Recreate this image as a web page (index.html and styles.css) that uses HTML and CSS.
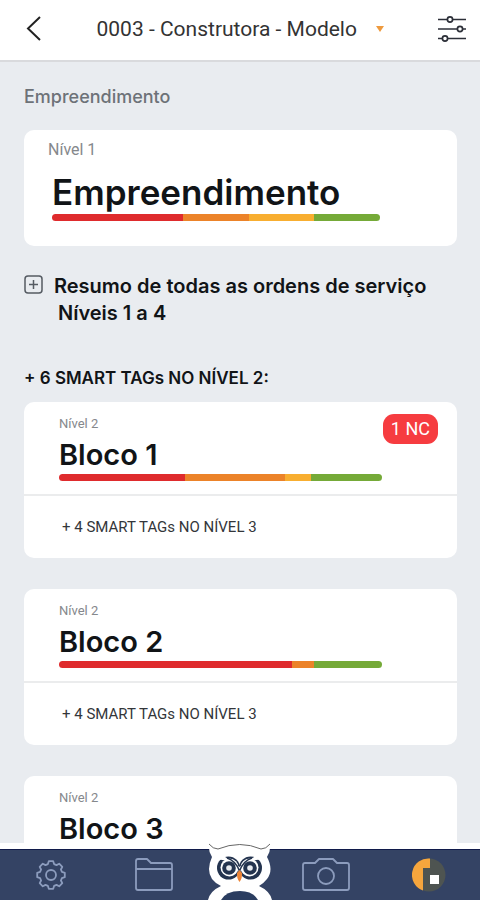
FILE: index.html
```
<!DOCTYPE html>
<html lang="pt-BR">
	<head>
		<meta charset="utf-8">
		<meta name="viewport" content="width=device-width, initial-scale=1">
		<title>0003 - Construtora - Modelo</title>
		<link rel="stylesheet" href="styles.css">
	</head>
	<body>
		<div class="screen">
			<header class="header">
				<button class="icon_button" type="button" aria-label="Voltar">
					<svg width="16" height="26" viewBox="0 0 16 26"><path d="M14 1 2 12.500 14 24" fill="none" stroke="#222" stroke-width="2"/></svg>
				</button>
				<label class="project">
					<select class="project_select" aria-label="Construtora">
						<option>0003 - Construtora - Modelo</option>
					</select>
					<svg width="8" height="6" viewBox="0 0 8 6"><path d="M0 0h8L4 6z" fill="#ee9a3e"/></svg>
				</label>
				<button class="icon_button" type="button" aria-label="Filtros">
					<svg width="28" height="26" viewBox="0 0 28 26" fill="#fff" stroke="#2c2f38" stroke-width="1.700">
						<path d="M0 3.500h28M0 13h28M0 22.500h28"/>
						<circle cx="12" cy="3.500" r="2.600"/>
						<circle cx="22" cy="13" r="2.600"/>
						<circle cx="7" cy="22.500" r="2.600"/>
					</svg>
				</button>
			</header>
			<main class="content">
				<p class="section_label">Empreendimento</p>
				<section class="card card_main">
					<p class="level">Nível 1</p>
					<h1 class="main_title">Empreendimento</h1>
					<div class="bar">
						<span class="red" style="width: 40%"></span>
						<span class="orange" style="width: 20%"></span>
						<span class="yellow" style="width: 20%"></span>
						<span class="green" style="width: 20%"></span>
					</div>
				</section>
				<button class="summary" type="button">
					<svg width="19" height="19" viewBox="0 0 19 19" fill="none" stroke="#555b62" stroke-width="1.500"><rect x="1" y="1" width="17" height="17" rx="3"/><path d="M5 9.500h9M9.500 5v9"/></svg>
					<span>Resumo de todas as ordens de serviço<br><span class="summary_levels">Níveis 1 a 4</span></span>
				</button>
				<h2 class="tags_title">+ 6 SMART TAGs NO NÍVEL 2:</h2>
				<div class="blocks">
					<section class="card">
						<div class="block_top">
							<p class="level">Nível 2</p>
							<h3 class="block_title">Bloco 1</h3>
							<div class="bar">
								<span class="red" style="width: 39%"></span>
								<span class="orange" style="width: 31%"></span>
								<span class="yellow" style="width: 8%"></span>
								<span class="green" style="width: 22%"></span>
							</div>
							<span class="badge">1 NC</span>
						</div>
						<button class="block_more" type="button">+ 4 SMART TAGs NO NÍVEL 3</button>
					</section>
					<section class="card">
						<div class="block_top">
							<p class="level">Nível 2</p>
							<h3 class="block_title">Bloco 2</h3>
							<div class="bar">
								<span class="red" style="width: 72%"></span>
								<span class="orange" style="width: 7%"></span>
								<span class="green" style="width: 21%"></span>
							</div>
						</div>
						<button class="block_more" type="button">+ 4 SMART TAGs NO NÍVEL 3</button>
					</section>
					<section class="card">
						<div class="block_top">
							<p class="level">Nível 2</p>
							<h3 class="block_title">Bloco 3</h3>
						</div>
					</section>
				</div>
			</main>
			<nav class="footer">
				<a href="#config" aria-label="Configurações">
					<svg width="30" height="30" viewBox="0 0 30 30" fill="none" stroke="#8c9cbd" stroke-width="1.800" stroke-linejoin="round">
						<path d="M11.900 4.100L12.800 1.200H17.200L18.100 4.100L20.500 5.100L23.200 3.700L26.300 6.800L24.900 9.500L25.900 11.900L28.800 12.800V17.200L25.900 18.100L24.900 20.500L26.300 23.200L23.200 26.300L20.500 24.900L18.100 25.900L17.200 28.800H12.800L11.900 25.900L9.500 24.900L6.800 26.300L3.700 23.200L5.100 20.500L4.100 18.100L1.200 17.200V12.800L4.100 11.900L5.100 9.500L3.700 6.800L6.800 3.700L9.500 5.100Z"/>
						<circle cx="15" cy="15" r="5"/>
					</svg>
				</a>
				<a href="#pastas" aria-label="Pastas">
					<svg width="38" height="34" viewBox="0 0 38 34" fill="none" stroke="#8c9cbd" stroke-width="1.800" stroke-linejoin="round">
						<path d="M1 30V3q0-2 2-2h9l4 4h19q2 0 2 2v23q0 2-2 2H3q-2 0-2-2zM1 11h36"/>
					</svg>
				</a>
				<a class="owl" href="#inicio" aria-label="Início">
					<svg width="66" height="57" viewBox="0 0 66 57">
						<path d="M2 1Q7 6 12 5Q33-1 53 5Q58 6 63 1Q64 8 60 14Q67 27 60 36Q56 41 52 43Q63 48 65 57H1Q3 48 14 43Q9 41 5 36Q-1 27 5 14Q1 8 2 1Z" fill="#fff"/>
						<path d="M2 1Q6 6 11 6Q33-3 54 6Q59 6 63 1" fill="none" stroke="#666" stroke-width="1"/>
						<circle cx="21.500" cy="25" r="11.500" fill="#24344f"/>
						<circle cx="43.500" cy="25" r="11.500" fill="#24344f"/>
						<circle cx="22.500" cy="24.500" r="9" fill="#fff"/>
						<circle cx="42.500" cy="24.500" r="9" fill="#fff"/>
						<path d="M4 9Q19 12 32.500 24Q46 12 61 9L57 18Q45 13 32.500 29Q20 13 8 18Z" fill="#fff"/>
						<circle cx="22" cy="25" r="6.800" fill="#24344f"/>
						<circle cx="43" cy="25" r="6.800" fill="#24344f"/>
						<circle cx="22" cy="25" r="2.800" fill="#e8ebef"/>
						<circle cx="43" cy="25" r="2.800" fill="#e8ebef"/>
						<path d="M20 15Q29 18 32.500 28Q36 18 45 15" fill="none" stroke="#24344f" stroke-width="1.500"/>
						<path d="M30 30L32.500 27L35 30Q35.500 35 32.500 39Q29.500 35 30 30Z" fill="#ec8436"/>
						<path d="M14 57Q19 48 33 48Q46 48 51 57Z" fill="#2b3d60"/>
					</svg>
				</a>
				<a href="#camera" aria-label="Câmera">
					<svg width="48" height="34" viewBox="0 0 48 34" fill="none" stroke="#8c9cbd" stroke-width="1.800" stroke-linejoin="round">
						<path d="M1 30V7q0-2 2-2h10l4-4h14l4 4h10q2 0 2 2v23q0 2-2 2H3q-2 0-2-2z"/>
						<circle cx="24" cy="18" r="8"/>
					</svg>
				</a>
				<a href="#painel" aria-label="Painel">
					<svg width="34" height="34" viewBox="0 0 34 34">
						<circle cx="17" cy="17" r="16.500" fill="#4e5451"/>
						<path d="M18 .500A16.500 16.500 0 0 0 11 32.500V10h7z" fill="#f6a63d"/>
						<path d="M18 17h9v9h-9z" fill="#fff"/>
					</svg>
				</a>
			</nav>
		</div>
	</body>
</html>
```
FILE: styles.css
```
*	{
	box-sizing: border-box;
}
html, body	{
	height: 100%;
	margin: 0;
}
body	{
	font-family: Inter, sans-serif;
	color: #111417;
	background: #e9ecf0;
}
h1, h2, h3, p	{
	margin: 0;
}
button, select	{
	font: inherit;
	color: inherit;
	border: 0;
	padding: 0;
	background: none;
	cursor: pointer;
}
svg	{
	display: block;
	flex-shrink: 0;
}
.screen	{
	display: flex;
	flex-direction: column;
	height: 100%;
}
.header	{
	display: flex;
	align-items: center;
	justify-content: space-between;
	padding: 15px 14px 17px 26px;
	background: #fff;
	border-bottom: 2px solid #d9dadd;
	flex-shrink: 0;
}
.project	{
	display: flex;
	align-items: center;
	gap: 18px;
}
.project_select	{
	appearance: none;
	font-family: Roboto, sans-serif;
	font-size: 21px;
	line-height: 28px;
	color: #333;
}
.content	{
	flex: 1;
	min-height: 0;
	overflow-y: auto;
	scrollbar-width: none;
	padding: 23px 23px 0 24px;
}
.section_label	{
	font-size: 18px;
	font-weight: 500;
	line-height: 24px;
	color: #6d7278;
}
.card	{
	background: #fff;
	border-radius: 10px;
}
.level	{
	font-family: Roboto, sans-serif;
	color: #85888c;
}
.card_main	{
	margin-top: 21px;
	padding: 8px 24px 25px 28px;
}
.card_main .level	{
	margin-left: -4px;
	font-size: 16px;
	line-height: 24px;
}
.main_title	{
	font-size: 35px;
	font-weight: 600;
	line-height: 44px;
	padding-top: 8px;
}
.bar	{
	display: flex;
	width: 86%;
	height: 7px;
	border-radius: 4px;
	overflow: hidden;
}
.red	{
	background: #df2b2d;
}
.orange	{
	background: #ec8329;
}
.yellow	{
	background: #f8ae30;
}
.green	{
	background: #75aa38;
}
.summary	{
	display: flex;
	gap: 11px;
	margin-top: 27px;
	font-size: 20px;
	font-weight: 600;
	line-height: 27px;
	text-align: left;
}
.summary svg	{
	margin-top: 2px;
}
.summary_levels	{
	padding-left: 4px;
}
.tags_title	{
	margin: 39px 0 12px;
	font-size: 17px;
	font-weight: 600;
	line-height: 24px;
}
.blocks	{
	display: flex;
	flex-direction: column;
	gap: 31px;
}
.block_top	{
	position: relative;
	padding: 12px 35px 13px;
}
.block_top .level	{
	font-size: 13px;
	line-height: 20px;
}
.block_title	{
	padding: 6px 0 4px;
	font-size: 29px;
	font-weight: 600;
	line-height: 30px;
}
.block_top .bar	{
	width: 89%;
}
.badge	{
	position: absolute;
	top: 12px;
	right: 19px;
	padding: 0 8px;
	border-radius: 11px;
	font-family: Roboto, sans-serif;
	font-size: 18px;
	line-height: 30px;
	color: #fff;
	background: #f63c40;
}
.block_more	{
	width: 100%;
	padding: 20px 38px 20px;
	border-top: 2px solid #ebeced;
	font-family: Roboto, sans-serif;
	font-size: 15px;
	line-height: 22px;
	text-align: left;
	color: #33363a;
}
.footer	{
	display: grid;
	grid-template-columns: 1fr 1fr 70px 1fr 1fr;
	align-items: center;
	justify-items: center;
	height: 57px;
	flex-shrink: 0;
	border-top: 6px solid #fff;
	background: #344364;
	box-shadow: inset 0 1px #101a4a;
}
.footer .owl	{
	align-self: end;
	margin-top: -6px;
}
```
